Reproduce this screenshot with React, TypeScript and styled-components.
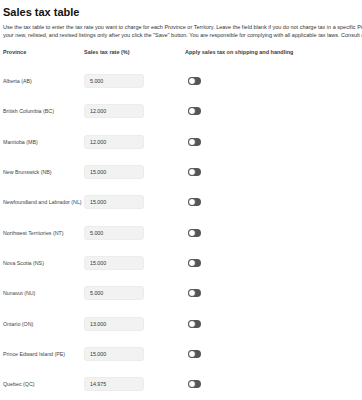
import styled, { createGlobalStyle } from "styled-components";

interface Province {
  name: string;
  rate: string;
}

const provinces: Province[] = [
  { name: "Alberta (AB)", rate: "5.000" },
  { name: "British Columbia (BC)", rate: "12.000" },
  { name: "Manitoba (MB)", rate: "12.000" },
  { name: "New Brunswick (NB)", rate: "15.000" },
  { name: "Newfoundland and Labrador (NL)", rate: "15.000" },
  { name: "Northwest Territories (NT)", rate: "5.000" },
  { name: "Nova Scotia (NS)", rate: "15.000" },
  { name: "Nunavut (NU)", rate: "5.000" },
  { name: "Ontario (ON)", rate: "13.000" },
  { name: "Prince Edward Island (PE)", rate: "15.000" },
  { name: "Quebec (QC)", rate: "14.975" },
];

const GlobalStyle = createGlobalStyle`
  body {
    margin: 0;
    background: #fff;
    font-family: "Liberation Sans", Arial, sans-serif;
    color: #333;
    overflow: hidden;
  }
`;

const Page = styled.div`
  padding: 4px 3px 0;
  width: 359px;
  overflow: hidden;
`;

const Title = styled.h1`
  margin: 0;
  font-size: 11px;
  line-height: 16px;
  font-weight: 700;
  color: #111;
`;

const Description = styled.p`
  margin: 3px 0 0;
  font-size: 5.5px;
  line-height: 8px;
  color: #333;
  white-space: nowrap;
`;

const Table = styled.div`
  display: grid;
  grid-template-columns: 81px 101px 1fr;
  margin-top: 6px;
`;

const HeaderCell = styled.div`
  font-size: 5.5px;
  font-weight: 700;
  color: #3a3a3a;
  height: 14px;
  display: flex;
  align-items: center;
`;

const Cell = styled.div`
  height: 30.3px;
  display: flex;
  align-items: center;
  font-size: 5.3px;
  color: #444;
  white-space: nowrap;
`;

const RateInput = styled.div`
  box-sizing: border-box;
  width: 60px;
  height: 14px;
  border-radius: 3px;
  background: #f2f2f2;
  border: 1px solid #ececec;
  padding-left: 5px;
  display: flex;
  align-items: center;
  font-size: 5.3px;
  color: #333;
`;

const Toggle = styled.span<{ on?: boolean }>`
  position: relative;
  display: inline-block;
  width: 13px;
  height: 8px;
  border-radius: 4px;
  background: ${({ on }) => (on ? "#3665f3" : "#555")};
  margin-left: 3px;

  &::after {
    content: "";
    position: absolute;
    top: 0;
    left: ${({ on }) => (on ? "5px" : "0")};
    box-sizing: border-box;
    width: 8px;
    height: 8px;
    border-radius: 50%;
    background: #fff;
    border: 1px solid #555;
  }
`;

const Spacer = styled.div`
  height: 7px;
  grid-column: 1 / -1;
`;

const App = () => {
  return (
    <>
      <GlobalStyle />
      <Page>
        <Title>Sales tax table</Title>
        <Description>
          Use the tax table to enter the tax rate you want to charge for each
          Province or Territory. Leave the field blank if you do not charge tax
          in a specific Province or Territory.
          <br />
          your new, relisted, and revised listings only after you click the
          "Save" button. You are responsible for complying with all applicable
          tax laws. Consult a tax professional.
        </Description>
        <Table>
          <HeaderCell>Province</HeaderCell>
          <HeaderCell>Sales tax rate (%)</HeaderCell>
          <HeaderCell>Apply sales tax on shipping and handling</HeaderCell>
          <Spacer />
          {provinces.map((p) => (
            <>
              <Cell key={p.name}>{p.name}</Cell>
              <Cell>
                <RateInput>{p.rate}</RateInput>
              </Cell>
              <Cell>
                <Toggle />
              </Cell>
            </>
          ))}
        </Table>
      </Page>
    </>
  );
};

export default App;
